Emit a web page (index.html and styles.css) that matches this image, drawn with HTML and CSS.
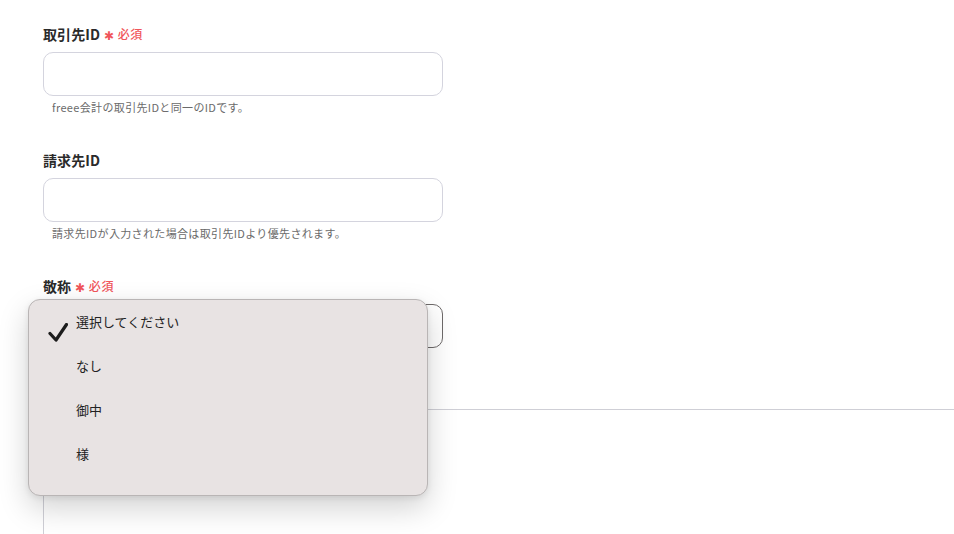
FILE: index.html
```html
<!DOCTYPE html>
<html lang="ja">
<head>
<meta charset="utf-8">
<link rel="stylesheet" href="styles.css">
</head>
<body>
<div class="form">
  <div class="field">
    <div class="label">取引先ID<span class="req"><span class="ast">✱</span>必須</span></div>
    <div class="input"></div>
    <div class="help">freee会計の取引先IDと同一のIDです。</div>
  </div>
  <div class="field">
    <div class="label">請求先ID</div>
    <div class="input"></div>
    <div class="help">請求先IDが入力された場合は取引先IDより優先されます。</div>
  </div>
  <div class="field">
    <div class="label">敬称<span class="req"><span class="ast">✱</span>必須</span></div>
    <div class="select-wrap">
      <div class="input select"></div>
      <div class="menu">
        <div class="item selected">
          <svg class="check" width="20" height="20" viewBox="0 0 20 20"><path d="M2 10.5 L8 17 L18.5 1.5" fill="none" stroke="#1c1c1c" stroke-width="3.2" stroke-linecap="round" stroke-linejoin="round"/></svg>
          <span>選択してください</span>
        </div>
        <div class="item"><span>なし</span></div>
        <div class="item"><span>御中</span></div>
        <div class="item"><span>様</span></div>
      </div>
    </div>
  </div>
  <div class="next-box"></div>
</div>
</body>
</html>
```

FILE: styles.css
```css
html, body {
  margin: 0;
  padding: 0;
  background: #ffffff;
  overflow: hidden;
  width: 954px;
  height: 534px;
}
body {
  font-family: "Noto Sans CJK JP", "Noto Sans", sans-serif;
  color: #2b2b2b;
}
.form {
  padding: 24px 0 0 43px;
}
.field {
  display: flex;
  flex-direction: column;
  width: 400px;
}
.field + .field {
  margin-top: 35px;
}
.label {
  font-size: 14px;
  font-weight: 700;
  line-height: 20px;
  height: 20px;
  display: flex;
  align-items: center;
  color: #2a2a2a;
  letter-spacing: 0.1px;
}
.req {
  display: inline-flex;
  align-items: center;
  color: #f0555a;
  font-size: 12px;
  font-weight: 500;
  margin-left: 4px;
  letter-spacing: 0.6px;
}
.ast {
  font-size: 12px;
  margin-right: 3px;
  position: relative;
  top: 1px;
}
.input {
  margin-top: 8px;
  height: 44px;
  box-sizing: border-box;
  border: 1px solid #d4d4de;
  border-radius: 10px;
  background: #fff;
}
.help {
  margin-top: 3px;
  padding-left: 9px;
  font-size: 11px;
  line-height: 16px;
  color: #6a6a6a;
  letter-spacing: 0.35px;
}
.select-wrap {
  position: relative;
}
.select {
  border-color: #6e6a6a;
}
.menu {
  position: absolute;
  left: -15px;
  top: 3px;
  width: 400px;
  height: 197px;
  box-sizing: border-box;
  background: #e8e3e3;
  border: 1px solid #b9b5b5;
  border-radius: 12px;
  box-shadow: 0 12px 30px rgba(0, 0, 0, 0.18), 0 2px 6px rgba(0, 0, 0, 0.08);
  padding-top: 1px;
  z-index: 2;
}
.item {
  position: relative;
  height: 44px;
  box-sizing: border-box;
  padding-bottom: 4px;
  display: flex;
  align-items: center;
  padding-left: 47px;
  font-size: 13px;
  color: #222;
}
.check {
  position: absolute;
  left: 19px;
  top: 22px;
}
.next-box {
  margin-top: 61px;
  height: 124px;
  border-top: 1px solid #cfcfd6;
  border-left: 1px solid #cfcfd6;
}
```
